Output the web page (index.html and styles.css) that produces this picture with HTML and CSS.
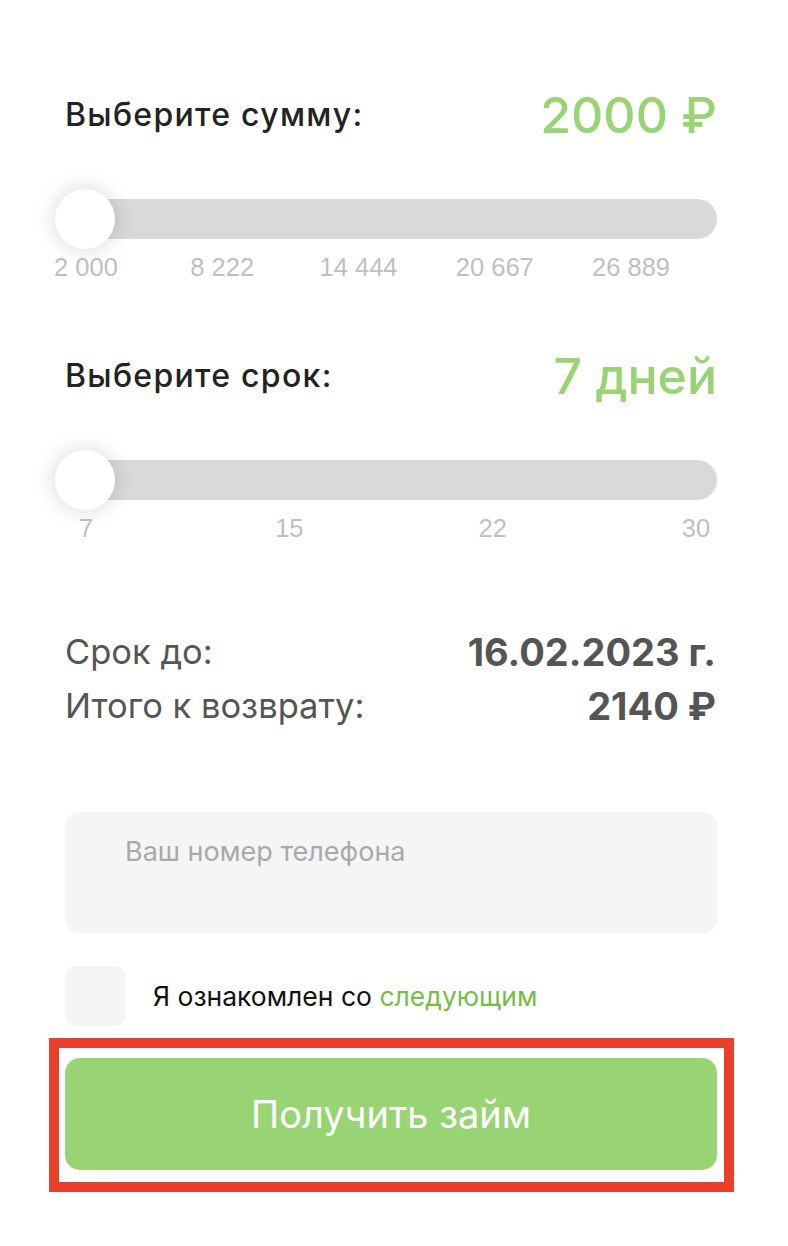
FILE: index.html
```html
<!DOCTYPE html>
<html lang="ru">
<head>
<meta charset="utf-8">
<title>Калькулятор займа</title>
<link rel="stylesheet" href="styles.css">
</head>
<body>
<main class="calc">
  <section class="param">
    <div class="param-head">
      <h2 class="param-title">Выберите сумму:</h2>
      <div class="param-value">2000 ₽</div>
    </div>
    <div class="slider">
      <div class="track"></div>
      <div class="thumb"></div>
    </div>
    <div class="ticks ticks-amount">
      <span class="tick">2 000</span>
      <span class="tick">8 222</span>
      <span class="tick">14 444</span>
      <span class="tick">20 667</span>
      <span class="tick">26 889</span>
    </div>
  </section>

  <section class="param param-term">
    <div class="param-head">
      <h2 class="param-title">Выберите срок:</h2>
      <div class="param-value">7 дней</div>
    </div>
    <div class="slider">
      <div class="track"></div>
      <div class="thumb"></div>
    </div>
    <div class="ticks ticks-term">
      <span class="tick">7</span>
      <span class="tick">15</span>
      <span class="tick">22</span>
      <span class="tick">30</span>
    </div>
  </section>

  <section class="summary">
    <div class="summary-row">
      <span class="summary-label">Срок до:</span>
      <span class="summary-value">16.02.2023 г.</span>
    </div>
    <div class="summary-row">
      <span class="summary-label">Итого к возврату:</span>
      <span class="summary-value">2140 ₽</span>
    </div>
  </section>

  <div class="phone">
    <span class="phone-placeholder">Ваш номер телефона</span>
  </div>

  <label class="agree">
    <span class="checkbox"></span>
    <span class="agree-text">Я ознакомлен со <a class="agree-link" href="#">следующим</a></span>
  </label>

  <div class="highlight">
    <button class="submit" type="button">Получить займ</button>
  </div>
</main>
</body>
</html>
```

FILE: styles.css
```css
* {
  box-sizing: border-box;
}

html, body {
  margin: 0;
  padding: 0;
  background: #ffffff;
}

body {
  font-family: Inter, "Noto Sans", sans-serif;
  color: #222222;
}

.calc {
  width: 652px;
  margin-left: 65px;
  padding-top: 85px;
}

.param-term {
  margin-top: 64px;
}

.param-head {
  display: flex;
  justify-content: space-between;
  align-items: center;
  height: 60px;
}

.param-title {
  margin: 0;
  font-size: 32px;
  font-weight: 500;
  line-height: 38px;
  color: #232323;
  letter-spacing: 1.3px;
}

.param-value {
  font-size: 50px;
  font-weight: 500;
  line-height: 60px;
  color: #98d474;
}

.slider {
  position: relative;
  height: 60px;
  margin-top: 44px;
  padding-top: 10px;
}

.track {
  height: 40px;
  border-radius: 20px;
  background: #d9d9d9;
}

.thumb {
  position: absolute;
  left: -10px;
  top: 0;
  width: 60px;
  height: 60px;
  border-radius: 50%;
  background: #ffffff;
  box-shadow: 0 0 22px rgba(0, 0, 0, 0.16);
}

.ticks {
  display: flex;
  justify-content: space-between;
  margin-top: 3px;
  font-family: "Liberation Sans", Arial, sans-serif;
  font-size: 25.5px;
  line-height: 30px;
  color: #c0c0c0;
}

.ticks-amount {
  width: 587px;
}

.tick {
  display: flex;
  justify-content: center;
  width: 42px;
  white-space: nowrap;
}

.summary {
  margin-top: 82px;
  color: #555555;
}

.summary-row {
  display: flex;
  justify-content: space-between;
  align-items: center;
  height: 54px;
}

.summary-label {
  font-size: 34.5px;
  font-weight: 400;
  line-height: 54px;
}

.summary-value {
  font-size: 38px;
  font-weight: 700;
  line-height: 54px;
  padding-right: 1px;
}

.phone {
  margin-top: 79px;
  height: 121px;
  border-radius: 14px;
  background: #f5f5f5;
  padding: 24px 0 0 60px;
}

.phone-placeholder {
  font-size: 27px;
  line-height: 32px;
  color: #a9a9a9;
}

.agree {
  display: flex;
  align-items: center;
  gap: 28px;
  margin-top: 33px;
}

.checkbox {
  width: 60px;
  height: 60px;
  border-radius: 10px;
  background: #f5f5f5;
}

.agree-text {
  font-size: 26.5px;
  line-height: 32px;
  color: #111111;
}

.agree-link {
  color: #74bd45;
  text-decoration: none;
}

.highlight {
  margin: 12px -17px 0 -16px;
  padding: 10px 7px 12px 6px;
  border: 10px solid #e8402a;
}

.submit {
  display: block;
  width: 100%;
  height: 112px;
  border: 0;
  border-radius: 15px;
  background: #98d374;
  color: #ffffff;
  font-family: Inter, "Noto Sans", sans-serif;
  font-size: 38px;
  font-weight: 400;
  line-height: 48px;
  cursor: pointer;
}
```
